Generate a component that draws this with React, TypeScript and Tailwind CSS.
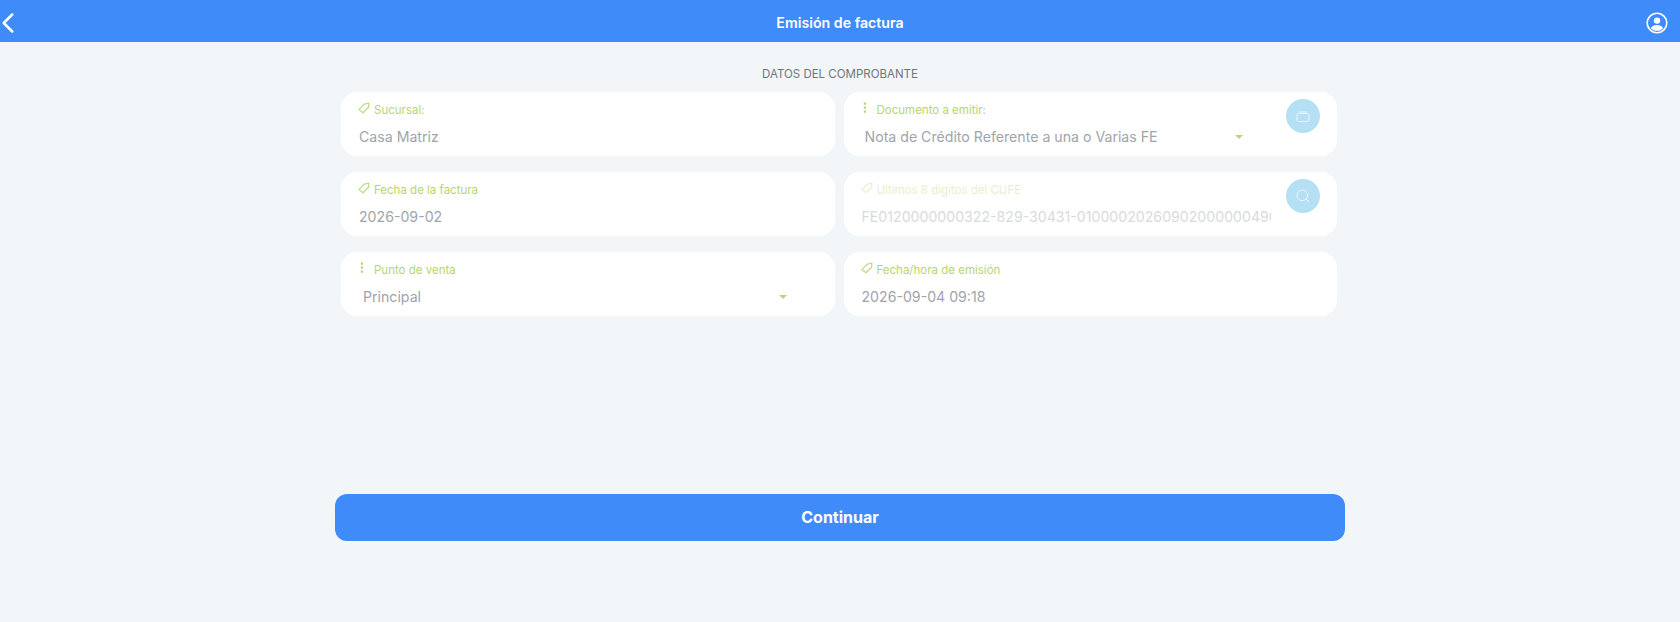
import { ChevronLeft, Search } from "lucide-react";

function TagIcon({ className = "" }: { className?: string }) {
  return (
    <svg viewBox="0 0 12 12" className={className} fill="none" stroke="currentColor" strokeWidth="1.3">
      <path d="M1 7.4 6.4 2.2 10.8 1.2 10.6 5.2 5 10.8Z" strokeLinejoin="round" />
    </svg>
  );
}

function DotsIcon() {
  return (
    <svg viewBox="0 0 4 12" className="h-3 w-1 text-[#b5d66f]" fill="currentColor">
      <rect x="0.8" y="0.5" width="2.2" height="2.2" />
      <rect x="0.8" y="4.5" width="2.2" height="2.2" />
      <rect x="0.8" y="8.5" width="2.2" height="2.2" />
    </svg>
  );
}

function Caret() {
  return <span className="h-0 w-0 border-x-[4px] border-t-[4px] border-x-transparent border-t-[#b9d77c]" />;
}

function UserIcon() {
  return (
    <svg viewBox="0 0 22 22" className="h-[22px] w-[22px] text-white" fill="none">
      <circle cx="11" cy="11" r="9.8" stroke="currentColor" strokeWidth="1.6" />
      <circle cx="11" cy="8.6" r="3.2" fill="currentColor" />
      <path d="M4.8 16.2c1.2-2.4 3.4-3.2 6.2-3.2s5 .8 6.2 3.2c-1.6 1.7-3.8 2.6-6.2 2.6s-4.6-.9-6.2-2.6Z" fill="currentColor" />
    </svg>
  );
}

function BoxIcon() {
  return (
    <svg viewBox="0 0 14 12" className="h-[12px] w-[14px] text-white opacity-70" fill="none" stroke="currentColor" strokeWidth="1">
      <rect x="1" y="3.5" width="12" height="8" rx="1.5" />
      <path d="M2.6 3.5 3.4 1h7.2l.8 2.5" fill="currentColor" fillOpacity="0.5" stroke="none" />
    </svg>
  );
}

function Card({
  label,
  icon = "tag",
  children,
  faded = false,
  round,
}: {
  label: string;
  icon?: "tag" | "dots";
  children: React.ReactNode;
  faded?: boolean;
  round?: React.ReactNode;
}) {
  return (
    <div className="relative h-[64px] rounded-[16px] bg-white px-[17px] pt-[10px]">
      <div className={`flex h-[18px] items-center gap-[4px] text-[11.5px] text-[#b5d66f] ${faded ? "opacity-35" : ""}`}>
        {icon === "tag" ? (
          <TagIcon className="-mt-[5px] h-3 w-3 text-[#c0dc8a]" />
        ) : (
          <span className="-mt-[5px] flex w-3 justify-start pl-[2px]">
            <DotsIcon />
          </span>
        )}
        <span>{label}</span>
      </div>
      <div className="mt-[7px] pl-px">{children}</div>
      {round && (
        <div className="absolute top-[7px] right-[17px] flex h-[34px] w-[34px] items-center justify-center rounded-full bg-[#b5dff5]">
          {round}
        </div>
      )}
    </div>
  );
}

export default function App() {
  return (
    <div className="flex h-[622px] flex-col bg-[#f2f6f9] font-['Inter',sans-serif]">
      <header className="grid h-[41.5px] grid-cols-[1fr_auto_1fr] items-center bg-[#3f8bfa] px-[12px] pt-[4px] text-white">
        <ChevronLeft className="-ml-[21px] h-[34px] w-[34px]" strokeWidth={1.8} />
        <h1 className="text-[14.2px] font-semibold">Emisión de factura</h1>
        <span className="flex justify-end">
          <UserIcon />
        </span>
      </header>

      <main className="mx-auto flex w-[1010px] flex-col items-center">
        <p className="mt-[25px] mb-[10px] h-[15px] text-[11.5px] leading-[15px] text-[#71757c]">DATOS DEL COMPROBANTE</p>

        <div className="mr-[2px] grid w-[996px] grid-cols-2 gap-x-[9px] gap-y-[16px]">
          <Card label="Sucursal:">
            <p className="text-[14.15px] leading-5 text-[#a1a4ac]">Casa Matriz</p>
          </Card>

          <Card label="Documento a emitir:" icon="dots" round={<BoxIcon />}>
            <div className="flex items-center pl-[3px]">
              <p className="text-[14.15px] leading-5 text-[#a1a4ac]">Nota de Crédito Referente a una o Varias FE</p>
              <span className="ml-[77px] flex">
                <Caret />
              </span>
            </div>
          </Card>

          <Card label="Fecha de la factura">
            <p className="text-[14.15px] leading-5 text-[#a1a4ac]">2026-09-02</p>
          </Card>

          <Card label="Ultimos 8 digitos del CUFE" faded round={<Search className="h-[16px] w-[16px] text-white opacity-80" strokeWidth={1.5} />}>
            <p className="w-[409px] overflow-hidden text-[14.15px] leading-5 whitespace-nowrap text-[#a1a4ac] opacity-40">
              FE0120000000322-829-30431-01000020260902000000490
            </p>
          </Card>

          <Card label="Punto de venta" icon="dots">
            <div className="flex items-center justify-between pr-[31px] pl-[4px]">
              <p className="text-[14.15px] leading-5 text-[#a1a4ac]">Principal</p>
              <Caret />
            </div>
          </Card>

          <Card label="Fecha/hora de emisión">
            <p className="text-[14.15px] leading-5 text-[#a1a4ac]">2026-09-04 09:18</p>
          </Card>
        </div>

        <button type="button" className="mt-[178px] h-[47.5px] w-full rounded-[12px] bg-[#3f8bfa] text-[16px] font-bold text-white">
          Continuar
        </button>
      </main>
    </div>
  );
}
